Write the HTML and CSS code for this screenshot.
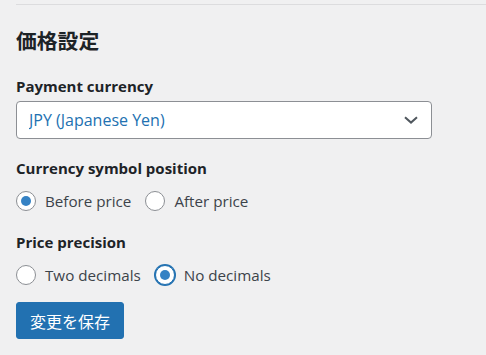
FILE: index.html
```html
<!DOCTYPE html>
<html lang="ja">
<head>
  <meta charset="UTF-8" />
  <meta name="viewport" content="width=device-width, initial-scale=1.0"/>
  <title>価格設定</title>
  <link rel="stylesheet" href="styles.css">
</head>
<body>

  <div class="settings">
    <div class="divider"></div>
    <h2>価格設定</h2>

    <form class="price-form" onsubmit="return false;">
      <div class="field">
        <label class="field-label" for="currency">Payment currency</label>
        <div class="select-wrap">
          <select id="currency">
            <option value="JPY" selected>JPY (Japanese Yen)</option>
            <option value="USD">USD (US Dollar)</option>
            <option value="EUR">EUR (Euro)</option>
          </select>
          <svg class="chevron" width="14" height="8" viewBox="0 0 14 8" aria-hidden="true">
            <path d="M1 1.2 L7 6.6 L13 1.2" fill="none" stroke="#50575e" stroke-width="2"/>
          </svg>
        </div>
      </div>

      <div class="field">
        <span class="field-label">Currency symbol position</span>
        <div class="radio-row">
          <label class="radio"><input type="radio" name="symbol" value="before" checked> Before price</label>
          <label class="radio"><input type="radio" name="symbol" value="after"> After price</label>
        </div>
      </div>

      <div class="field">
        <span class="field-label">Price precision</span>
        <div class="radio-row">
          <label class="radio"><input type="radio" name="precision" value="2"> Two decimals</label>
          <label class="radio"><input type="radio" name="precision" value="0" class="is-focused" checked> No decimals</label>
        </div>
      </div>

      <button type="submit" class="save-btn">変更を保存</button>
    </form>
  </div>

</body>
</html>
```

FILE: styles.css
```css
body {
  margin: 0;
  background: #f0f0f1;
  color: #1d2327;
  font-family: "Open Sans", "Noto Sans CJK JP", sans-serif;
}

.settings {
  padding: 4px 0 0 16px;
}

.divider {
  border-top: 1px solid #dcdcde;
}

h2 {
  margin: 21px 0 0;
  font-size: 20.8px;
  line-height: 1.4;
  font-weight: 700;
  font-family: "Noto Sans CJK JP", sans-serif;
}

.field {
  margin-top: 18px;
}

.field:first-child {
  margin-top: 20px;
}

.field-label {
  display: block;
  font-size: 15px;
  font-weight: 700;
  line-height: 22px;
  color: #1d2327;
}

.select-wrap {
  position: relative;
  width: 416px;
  margin-top: 4px;
}

select {
  appearance: none;
  -webkit-appearance: none;
  display: block;
  width: 100%;
  height: 38px;
  padding: 0 32px 0 12px;
  font-family: inherit;
  font-size: 16px;
  color: #2271b1;
  background: #fff;
  border: 1px solid #8c8f94;
  border-radius: 4px;
}

.chevron {
  position: absolute;
  right: 14px;
  top: 15px;
  pointer-events: none;
}

.radio-row {
  display: flex;
  align-items: center;
  gap: 14px;
  margin-top: 10px;
}

.radio {
  display: flex;
  align-items: center;
  gap: 9px;
  font-size: 15.2px;
  line-height: 24px;
  color: #3c434a;
}

.radio input {
  appearance: none;
  -webkit-appearance: none;
  position: relative;
  width: 20px;
  height: 20px;
  margin: 0;
  background: #fff;
  border: 1px solid #8c8f94;
  border-radius: 50%;
}

.radio input:checked::before {
  content: "";
  position: absolute;
  top: 4px;
  left: 4px;
  width: 10px;
  height: 10px;
  border-radius: 50%;
  background: #3582c4;
}

.radio input.is-focused {
  border-color: #2271b1;
  box-shadow: 0 0 0 1px #2271b1;
}

.save-btn {
  margin-top: 15px;
  height: 37px;
  padding: 0 13px;
  font-family: "Noto Sans CJK JP", sans-serif;
  font-size: 16px;
  color: #fff;
  background: #2271b1;
  border: 1px solid #2271b1;
  border-radius: 3px;
  cursor: pointer;
}
```
